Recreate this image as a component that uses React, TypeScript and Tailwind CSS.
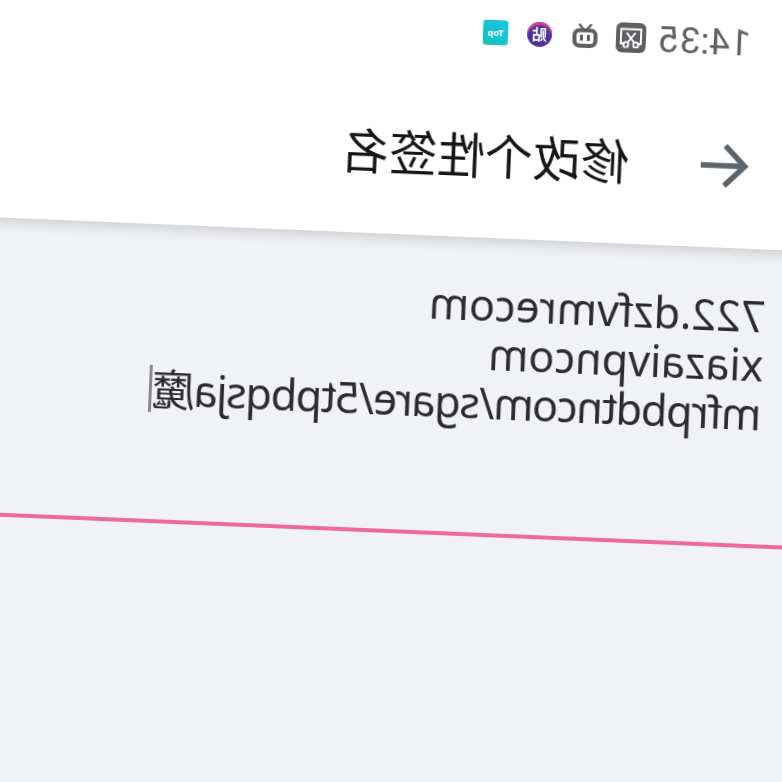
import React from "react";

function ArrowBack() {
  return (
    <svg width="48" height="44" viewBox="0 0 48 44" fill="none" stroke="#5f6468" strokeWidth="5.5">
      <path d="M48 22H4" />
      <path d="M24 2 4 22l20 20" />
    </svg>
  );
}

function CutIcon() {
  return (
    <svg width="30" height="30" viewBox="0 0 30 30" fill="none">
      <rect width="30" height="30" rx="6" fill="#5d5f62" />
      <path d="M9 21H5V6.5h20V21h-4" stroke="#fff" strokeWidth="2" />
      <path d="M10.5 10l8 10M19.5 10l-8 10" stroke="#fff" strokeWidth="2" />
      <circle cx="10" cy="22" r="2.6" stroke="#fff" strokeWidth="1.8" />
      <circle cx="20" cy="22" r="2.6" stroke="#fff" strokeWidth="1.8" />
    </svg>
  );
}

function TvIcon() {
  return (
    <svg width="26" height="24" viewBox="0 0 26 24" fill="none">
      <path d="M7.5 1l4 5M18.5 1l-4 5" stroke="#5d5f62" strokeWidth="2.4" strokeLinecap="round" />
      <rect x="2.5" y="6.5" width="21" height="15.5" rx="5" stroke="#5d5f62" strokeWidth="4" />
      <path d="M9.5 11v6M16.5 11v6" stroke="#5d5f62" strokeWidth="3" />
    </svg>
  );
}

export default function App() {
  return (
    <div className="h-[782px] w-[782px] overflow-hidden bg-[#f0f2f5]">
      <div
        className="ml-[-60px] mt-[-60px] flex h-[902px] w-[902px] -scale-x-100 rotate-[2.4deg] flex-col bg-[#f0f2f5] blur-[0.5px]"
        style={{ fontFamily: '"Noto Sans", "Noto Sans CJK SC", sans-serif' }}
      >
        <header className="relative h-[294px] bg-white shadow-[0_4px_12px_rgba(0,0,0,0.16)]">
          <div className="flex h-[106px] items-center pl-[106px] pt-[70px]">
            <span className="w-[91px] whitespace-nowrap font-['Roboto'] text-[37px] leading-none text-[#5f6265]">14:35</span>
            <div className="ml-[14px] flex w-[30px] justify-center"><CutIcon /></div>
            <div className="ml-[18px] flex w-[26px] justify-center"><TvIcon /></div>
            <div className="ml-[20px] flex h-[25px] w-[25px] items-center justify-center rounded-full bg-[#4a2fa0] text-[15px] font-bold leading-none text-white shadow-[inset_0_3px_2px_#e0468c]">贴</div>
            <div className="ml-[19px] flex h-[25px] w-[25px] items-center justify-center rounded-[3px] bg-gradient-to-br from-[#1fc4e4] to-[#12c4b8] text-[9px] font-bold leading-none text-white">Top</div>
          </div>
          <div className="flex h-[188px] items-center pl-[103px] pt-[24px]">
            <ArrowBack />
            <h1 className="ml-[72px] text-[48px] font-normal leading-none text-[#161616]">修改个性签名</h1>
          </div>
        </header>
        <div className="h-[299px] border-b-4 border-[#ee6a9a] pl-[80px] pt-[42px] text-[43px] leading-[49px] text-[#2c2c2e]">
          <div>722.dzfvmrecom</div>
          <div>xiazaivpncom</div>
          <div className="flex items-center tracking-[-1.3px]">
            <span className="whitespace-nowrap">mfrpbdtncom/sgare/5tpbqsja魔</span>
            <span className="ml-px h-[47px] w-[3px] bg-[#8a8a8a]" />
          </div>
        </div>
      </div>
    </div>
  );
}
